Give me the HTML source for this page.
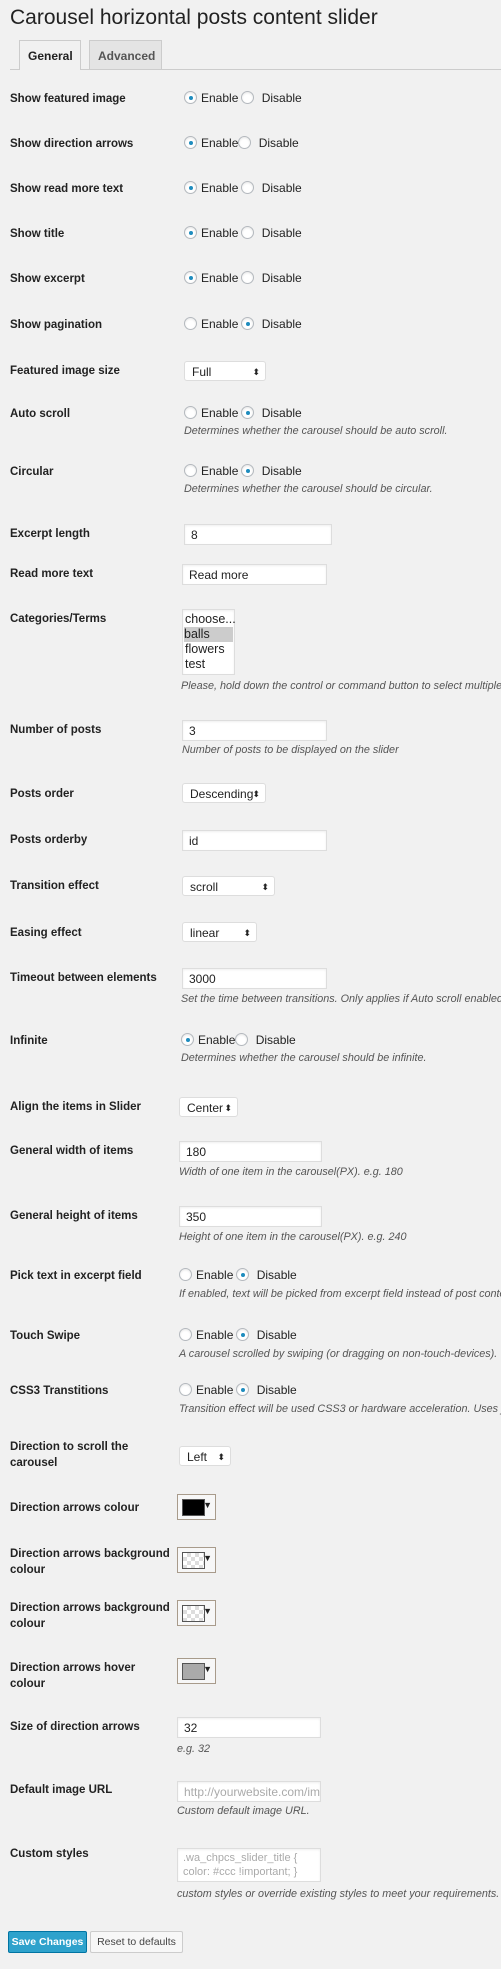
<!DOCTYPE html>
<html><head><meta charset="utf-8"><style>
html,body{margin:0;padding:0;background:#f1f1f1;}
#w{width:501px;height:1969px;position:relative;overflow:hidden;font-family:"Liberation Sans",sans-serif;color:#222;font-size:12px;}
#w div{position:absolute;white-space:nowrap;}
.l{left:10px;font-weight:bold;line-height:16px;font-size:11.5px;}
.d{font-style:italic;color:#555;font-size:10.8px;}
.r{display:inline-block;width:13px;height:13px;border-radius:50%;background:#fff;border:1px solid #b4b9be;box-sizing:border-box;vertical-align:-2px;position:relative;margin-right:4px;box-shadow:inset 0 1px 2px rgba(0,0,0,.1)}
.r.on:after{content:"";position:absolute;left:3.5px;top:3.5px;width:4px;height:4px;border-radius:50%;background:#1e8cbe;}
.in{background:#fff;border:1px solid #ddd;box-sizing:border-box;box-shadow:inset 0 1px 2px rgba(0,0,0,.07);padding:3px 6px;line-height:14px;}
.sel{background:#fff;border:1px solid #ddd;border-radius:3px;box-sizing:border-box;padding:3px 7px;line-height:14px;}
.sel:after{content:"\2B0D";position:absolute;right:5px;top:3px;font-size:9px;}
.cp{width:39px;height:26px;border:1px solid #a89b8b;box-sizing:border-box;background:#f7f7f7;}
.cp i{position:absolute;left:4px;top:4px;width:23px;height:17px;border:1px solid #555;box-sizing:border-box;}
.cp b{position:absolute;right:3px;top:5px;font-size:9px;}
.chk{background:repeating-conic-gradient(#ddd 0 25%,#fff 0 50%) 0 0/8px 8px;}
</style></head><body><div id="w">
<div style="left:10px;top:6px;font-size:21px;color:#222;">Carousel horizontal posts content slider</div>
<div style="left:10px;top:69px;width:491px;border-top:1px solid #ccc;"></div>
<div style="left:19px;top:40px;width:62px;height:30px;background:#f1f1f1;border:1px solid #ccc;border-bottom:none;box-sizing:border-box;font-weight:bold;font-size:12px;padding:8px 0 0 8px;">General</div>
<div style="left:89px;top:40px;width:73px;height:29px;background:#e4e4e4;border:1px solid #ccc;border-bottom:none;box-sizing:border-box;font-weight:bold;font-size:12px;color:#555;padding:8px 0 0 8px;">Advanced</div>

<div class="l" style="top:91px">Show featured image</div>
<div style="left:184px;top:91px"><span class="r on"></span>Enable<span class="r" style="margin-left:3px"></span> Disable</div>
<div class="l" style="top:136px">Show direction arrows</div>
<div style="left:184px;top:136px"><span class="r on"></span>Enable<span class="r"></span> Disable</div>
<div class="l" style="top:181px">Show read more text</div>
<div style="left:184px;top:181px"><span class="r on"></span>Enable<span class="r" style="margin-left:3px"></span> Disable</div>
<div class="l" style="top:226px">Show title</div>
<div style="left:184px;top:226px"><span class="r on"></span>Enable<span class="r" style="margin-left:3px"></span> Disable</div>
<div class="l" style="top:271px">Show excerpt</div>
<div style="left:184px;top:271px"><span class="r on"></span>Enable<span class="r" style="margin-left:3px"></span> Disable</div>
<div class="l" style="top:317px">Show pagination</div>
<div style="left:184px;top:317px"><span class="r"></span>Enable<span class="r on" style="margin-left:3px"></span> Disable</div>
<div class="l" style="top:363px">Featured image size</div>
<div class="sel" style="left:184px;top:361px;width:82px;height:20px">Full</div>
<div class="l" style="top:406px">Auto scroll</div>
<div style="left:184px;top:406px"><span class="r"></span>Enable<span class="r on" style="margin-left:3px"></span> Disable</div>
<div class="d" style="left:184px;top:425px">Determines whether the carousel should be auto scroll.</div>
<div class="l" style="top:464px">Circular</div>
<div style="left:184px;top:464px"><span class="r"></span>Enable<span class="r on" style="margin-left:3px"></span> Disable</div>
<div class="d" style="left:184px;top:483px">Determines whether the carousel should be circular.</div>
<div class="l" style="top:526px">Excerpt length</div>
<div class="in" style="left:184px;top:524px;width:148px;height:21px">8</div>
<div class="l" style="top:566px">Read more text</div>
<div class="in" style="left:182px;top:564px;width:145px;height:21px">Read more</div>
<div class="l" style="top:611px">Categories/Terms</div>
<div class="in" style="left:182px;top:609px;width:53px;height:66px;padding:2px;line-height:15px;font-size:12.5px">choose...<br><span style="background:#ccc;display:block;margin:0 -1px">balls</span>flowers<br>test</div>
<div class="d" style="left:181px;top:680px">Please, hold down the control or command button to select multiple</div>
<div class="l" style="top:722px">Number of posts</div>
<div class="in" style="left:182px;top:720px;width:145px;height:21px">3</div>
<div class="d" style="left:182px;top:744px">Number of posts to be displayed on the slider</div>
<div class="l" style="top:786px">Posts order</div>
<div class="sel" style="left:182px;top:783px;width:84px;height:20px">Descending</div>
<div class="l" style="top:832px">Posts orderby</div>
<div class="in" style="left:182px;top:830px;width:145px;height:21px">id</div>
<div class="l" style="top:878px">Transition effect</div>
<div class="sel" style="left:182px;top:876px;width:93px;height:20px">scroll</div>
<div class="l" style="top:925px">Easing effect</div>
<div class="sel" style="left:182px;top:922px;width:75px;height:20px">linear</div>
<div class="l" style="top:970px">Timeout between elements</div>
<div class="in" style="left:182px;top:968px;width:145px;height:21px">3000</div>
<div class="d" style="left:181px;top:993px">Set the time between transitions. Only applies if Auto scroll enabled</div>
<div class="l" style="top:1033px">Infinite</div>
<div style="left:181px;top:1033px"><span class="r on"></span>Enable<span class="r"></span> Disable</div>
<div class="d" style="left:181px;top:1052px">Determines whether the carousel should be infinite.</div>
<div class="l" style="top:1099px">Align the items in Slider</div>
<div class="sel" style="left:179px;top:1097px;width:59px;height:20px">Center</div>
<div class="l" style="top:1143px">General width of items</div>
<div class="in" style="left:179px;top:1141px;width:143px;height:21px">180</div>
<div class="d" style="left:179px;top:1166px">Width of one item in the carousel(PX). e.g. 180</div>
<div class="l" style="top:1208px">General height of items</div>
<div class="in" style="left:179px;top:1206px;width:143px;height:21px">350</div>
<div class="d" style="left:179px;top:1231px">Height of one item in the carousel(PX). e.g. 240</div>
<div class="l" style="top:1268px">Pick text in excerpt field</div>
<div style="left:179px;top:1268px"><span class="r"></span>Enable<span class="r on" style="margin-left:3px"></span> Disable</div>
<div class="d" style="left:179px;top:1288px">If enabled, text will be picked from excerpt field instead of post content</div>
<div class="l" style="top:1328px">Touch Swipe</div>
<div style="left:179px;top:1328px"><span class="r"></span>Enable<span class="r on" style="margin-left:3px"></span> Disable</div>
<div class="d" style="left:179px;top:1348px">A carousel scrolled by swiping (or dragging on non-touch-devices). Use</div>
<div class="l" style="top:1383px">CSS3 Transtitions</div>
<div style="left:179px;top:1383px"><span class="r"></span>Enable<span class="r on" style="margin-left:3px"></span> Disable</div>
<div class="d" style="left:179px;top:1403px">Transition effect will be used CSS3 or hardware acceleration. Uses jquery</div>
<div class="l" style="top:1439px">Direction to scroll the<br>carousel</div>
<div class="sel" style="left:179px;top:1446px;width:52px;height:20px">Left</div>
<div class="l" style="top:1500px">Direction arrows colour</div>
<div class="cp" style="left:177px;top:1494px"><i style="background:#000"></i><b>▼</b></div>
<div class="l" style="top:1546px">Direction arrows background<br>colour</div>
<div class="cp" style="left:177px;top:1547px"><i class="chk"></i><b>▼</b></div>
<div class="l" style="top:1600px">Direction arrows background<br>colour</div>
<div class="cp" style="left:177px;top:1600px"><i class="chk"></i><b>▼</b></div>
<div class="l" style="top:1660px">Direction arrows hover<br>colour</div>
<div class="cp" style="left:177px;top:1658px"><i style="background:#aaa"></i><b>▼</b></div>
<div class="l" style="top:1719px">Size of direction arrows</div>
<div class="in" style="left:177px;top:1717px;width:144px;height:21px">32</div>
<div class="d" style="left:177px;top:1743px">e.g. 32</div>
<div class="l" style="top:1782px">Default image URL</div>
<div class="in" style="left:177px;top:1781px;width:144px;height:21px;color:#aaa;overflow:hidden">http://yourwebsite.com/im</div>
<div class="d" style="left:177px;top:1805px">Custom default image URL.</div>
<div class="l" style="top:1846px">Custom styles</div>
<div class="in" style="left:177px;top:1848px;width:144px;height:34px;color:#aaa;line-height:14px;font-size:11px;padding:2px 5px">.wa_chpcs_slider_title {<br>color: #ccc !important; }</div>
<div class="d" style="left:177px;top:1888px">custom styles or override existing styles to meet your requirements.</div>
<div style="left:8px;top:1931px;width:79px;height:22px;background:#2ea2cc;border:1px solid #0074a2;box-sizing:border-box;border-radius:2px;color:#fff;font-weight:bold;font-size:10.5px;text-align:center;line-height:20px">Save Changes</div>
<div style="left:90px;top:1931px;width:93px;height:22px;background:#f7f7f7;border:1px solid #ccc;box-sizing:border-box;border-radius:2px;font-size:10.5px;text-align:center;line-height:20px;color:#444">Reset to defaults</div>
</div></body></html>
